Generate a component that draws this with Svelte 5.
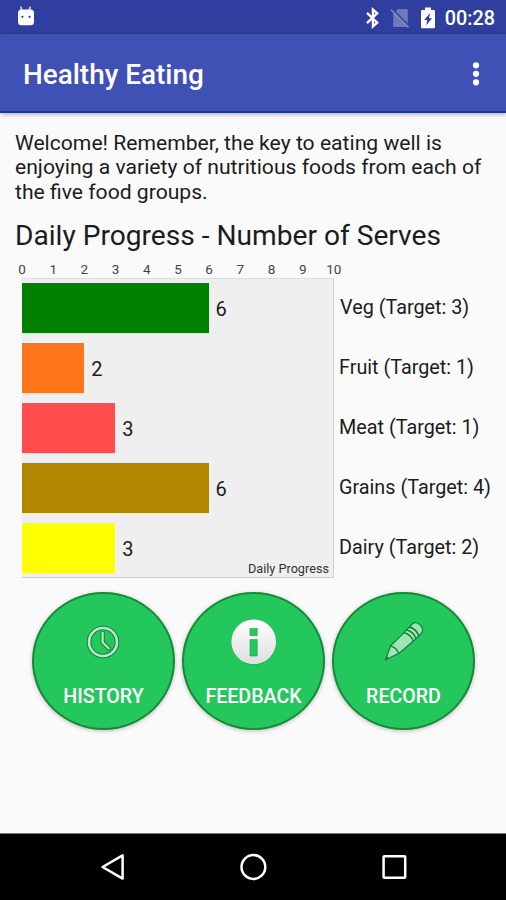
<script>
    const max = 10;
    const ticks = Array.from({ length: max + 1 }, (_, i) => i);

    const groups = [
        { name: 'Veg', serves: 6, target: 3, color: '#008000' },
        { name: 'Fruit', serves: 2, target: 1, color: '#ff7519' },
        { name: 'Meat', serves: 3, target: 1, color: '#ff4d4d' },
        { name: 'Grains', serves: 6, target: 4, color: '#b38600' },
        { name: 'Dairy', serves: 3, target: 2, color: '#ffff00' }
    ];
</script>

<div class="screen">
    <div class="status-bar">
        <svg class="robot" width="18" height="20" viewBox="0 0 18 20">
            <path d="M3.8 0.6 4.8 5M13.2 0.6 12.2 5" stroke="#c9cdf0" stroke-width="1.8" />
            <rect x="1" y="3.6" width="16" height="15.6" rx="3.5" fill="#fff" />
            <circle cx="5.4" cy="10.8" r="1.1" fill="#303f9f" />
            <circle cx="12.6" cy="10.8" r="1.1" fill="#303f9f" />
        </svg>
        <div class="status-icons">
            <svg width="14" height="22" viewBox="0 0 14 22">
                <path d="M1 5.8 11.2 15.6 6.9 19.4V2.6L11.2 6.4 1 16.2" fill="none" stroke="#fff" stroke-width="2.3" />
            </svg>
            <svg width="20" height="22" viewBox="0 0 20 22">
                <path d="M3.8 6.3 8 2H16.4Q17.8 2 17.8 3.4V20H3.2V7Z" fill="#6f79bc" />
                <path d="M2 1.6 19.4 19.4" stroke="#303f9f" stroke-width="1.6" />
                <path d="M1 2.6 18.4 20.4" stroke="#7d86c3" stroke-width="1.6" />
            </svg>
            <svg width="16" height="22" viewBox="0 0 16 22">
                <path d="M5 0.6H11V3H13.8Q15 3 15 4.2V20Q15 21.2 13.8 21.2H2.2Q1 21.2 1 20V4.2Q1 3 2.2 3H5Z" fill="#fff" />
                <path d="M10 6 4.2 13H7.2L6.2 18.4 12 11.2H9Z" fill="#303f9f" />
            </svg>
            <span class="clock">00:28</span>
        </div>
    </div>

    <header class="app-bar">
        <h1>Healthy Eating</h1>
        <button class="menu" aria-label="More options">
            <svg width="8" height="26" viewBox="0 0 8 26">
                <circle cx="4" cy="4.3" r="3.1" fill="#fff" />
                <circle cx="4" cy="12.8" r="3.1" fill="#fff" />
                <circle cx="4" cy="21.3" r="3.1" fill="#fff" />
            </svg>
        </button>
    </header>

    <main>
        <p class="welcome">
            Welcome! Remember, the key to eating well is enjoying a variety of nutritious foods from each of the five food groups.
        </p>
        <h2>Daily Progress - Number of Serves</h2>

        <div class="progress">
            <div class="chart">
                <div class="axis">
                    {#each ticks as tick}
                        <span>{tick}</span>
                    {/each}
                </div>
                <div class="plot">
                    {#each groups as group}
                        <div class="row">
                            <div class="bar" style="width: {(group.serves / max) * 100}%; background: {group.color}"></div>
                            <span class="value">{group.serves}</span>
                        </div>
                    {/each}
                    <span class="caption">Daily Progress</span>
                </div>
            </div>
            <div class="labels">
                {#each groups as group}
                    <span>{group.name} (Target: {group.target})</span>
                {/each}
            </div>
        </div>

        <div class="actions">
            <button class="action">
                <svg width="46" height="46" viewBox="0 0 46 46">
                    <circle cx="22" cy="23" r="14" fill="none" stroke="#17813b" stroke-width="4.6" />
                    <circle cx="22" cy="23" r="14" fill="none" stroke="#b5ebc6" stroke-width="2.6" />
                    <path d="M21.6 12.6V23.2L29 30.6" fill="none" stroke="#17813b" stroke-width="4.4" />
                    <path d="M21.6 13V23.2L28.4 30" fill="none" stroke="#b5ebc6" stroke-width="2.2" />
                </svg>
                History
            </button>
            <button class="action">
                <svg width="46" height="46" viewBox="0 0 46 46">
                    <defs>
                        <linearGradient id="info" x1="0" y1="0" x2="0" y2="1">
                            <stop offset="0" stop-color="#fff" />
                            <stop offset="1" stop-color="#dedede" />
                        </linearGradient>
                    </defs>
                    <circle cx="22.7" cy="23.4" r="22.5" fill="#179443" opacity="0.5" />
                    <circle cx="22.7" cy="22.8" r="22.4" fill="url(#info)" />
                    <path d="M19 9.4H26.2V16.6H19ZM19 20.6H26.2V37H19Z" fill="#24c75c" stroke="#21a64f" stroke-width="0.7" />
                </svg>
                Feedback
            </button>
            <button class="action">
                <svg width="46" height="46" viewBox="0 0 46 46">
                    <g stroke="#17813b" stroke-width="1.3" stroke-linejoin="round" fill="#9de5b3">
                        <path d="M4.4 41 9.6 26.8Q15.6 28.4 17.8 34.4Z" />
                        <path d="M9.6 26.8 23 13.6Q30.4 15.6 32.2 22.2L17.8 34.4Q15.6 28.4 9.6 26.8Z" />
                        <path d="M23 13.6 25.6 10.8Q33 12.8 35 19.6L32.2 22.2Q30.4 15.6 23 13.6Z" />
                        <path d="M25.6 10.8 28.4 8Q35.6 10 37.8 17L35 19.6Q33 12.8 25.6 10.8Z" />
                        <path d="M28.4 8 31.6 4.8Q34.6 2.4 38.4 5.2Q43 9 41 13.4L37.8 17Q35.6 10 28.4 8Z" />
                    </g>
                    <path d="M4.4 41 5.8 37 8.2 39.2Z" fill="#17813b" />
                </svg>
                Record
            </button>
        </div>
    </main>

    <nav class="nav-bar">
        <svg width="28" height="30" viewBox="0 0 28 30">
            <path d="M3.6 15 23.6 3.4V26.6Z" fill="none" stroke="#fff" stroke-width="2.5" stroke-linejoin="round" />
        </svg>
        <svg width="28" height="30" viewBox="0 0 28 30">
            <circle cx="14.4" cy="15" r="11.9" fill="none" stroke="#fff" stroke-width="2.5" />
        </svg>
        <svg width="28" height="30" viewBox="0 0 28 30">
            <rect x="3.6" y="4.2" width="21.6" height="21.6" rx="0.8" fill="none" stroke="#fff" stroke-width="2.5" />
        </svg>
    </nav>
</div>

<style>
    :global(body) {
        margin: 0;
    }

    .screen {
        display: flex;
        flex-direction: column;
        width: 506px;
        height: 900px;
        overflow: hidden;
        background: #fafafa;
        color: #1c1c1c;
        font-family: Roboto, sans-serif;
    }

    svg {
        display: block;
        flex: none;
    }

    h1,
    h2,
    p {
        margin: 0;
        font-weight: 400;
    }

    button {
        border: none;
        padding: 0;
        background: none;
        font-family: inherit;
    }

    .status-bar {
        display: flex;
        justify-content: space-between;
        box-sizing: border-box;
        height: 34px;
        padding: 6px 11px 0 17px;
        background: #303f9f;
        color: #fff;
    }

    .status-icons {
        display: flex;
        align-items: center;
        height: 23px;
    }

    .status-icons svg:nth-child(2) {
        margin-left: 10px;
    }

    .status-icons svg:nth-child(3) {
        margin-left: 10px;
    }

    .clock {
        margin-left: 9px;
        padding-top: 2px;
        font-size: 19.8px;
        font-weight: 500;
    }

    .app-bar {
        display: flex;
        align-items: center;
        justify-content: space-between;
        flex: none;
        box-sizing: border-box;
        height: 79px;
        padding: 2px 26px 0 23px;
        background: #3f51b5;
        border-bottom: 2px solid #1b37a0;
        color: #fff;
        box-shadow: 0 1px 5px rgba(0, 0, 0, 0.35);
    }

    h1 {
        padding-top: 2px;
        font-size: 27.9px;
        font-weight: 500;
    }

    main {
        flex: 1;
        padding: 17.6px 15px 0;
    }

    .welcome {
        width: 480px;
        font-size: 21.13px;
        line-height: 24.7px;
    }

    h2 {
        margin-top: 14px;
        font-size: 28.13px;
        line-height: 34px;
        white-space: nowrap;
    }

    .progress {
        display: flex;
        margin-top: 8.3px;
        padding-left: 7px;
    }

    .chart {
        flex: none;
        width: 312px;
    }

    .axis {
        display: flex;
        justify-content: space-between;
        height: 17px;
        margin: 0 -10px;
        font-size: 13.5px;
        line-height: 17px;
        color: #444;
    }

    .axis span {
        width: 20px;
        text-align: center;
    }

    .plot {
        position: relative;
        box-sizing: border-box;
        height: 300px;
        padding-top: 4px;
        border: 1px solid #d0d0d0;
        border-left: none;
        border-top-color: #dedede;
        background: #efefef;
    }

    .row {
        display: flex;
        align-items: center;
        height: 50px;
        margin-bottom: 10px;
    }

    .bar {
        height: 100%;
    }

    .value {
        margin-left: 7px;
        padding-top: 1px;
        font-size: 20px;
        line-height: 24px;
    }

    .caption {
        position: absolute;
        right: 4px;
        bottom: 0;
        font-size: 12.7px;
        line-height: 16px;
        color: #333;
    }

    .labels {
        display: grid;
        grid-auto-rows: 60px;
        align-items: center;
        padding: 16px 0 0 5px;
        font-size: 19.8px;
        white-space: nowrap;
    }

    .labels span:first-child {
        padding-left: 1px;
    }

    .actions {
        display: flex;
        gap: 7px;
        margin-top: 14px;
        padding-left: 17px;
    }

    .action {
        display: flex;
        flex-direction: column;
        align-items: center;
        box-sizing: border-box;
        width: 143px;
        height: 138px;
        padding-top: 25px;
        border: 2px solid #168a36;
        border-radius: 50%;
        background: #24c75c;
        box-shadow: 0 1px 4px rgba(0, 0, 0, 0.25);
        color: #fff;
        font-size: 19.6px;
        font-weight: 500;
        line-height: 24px;
        text-transform: uppercase;
    }

    .action svg {
        margin-bottom: 20px;
    }

    .nav-bar {
        display: flex;
        align-items: center;
        justify-content: center;
        gap: 112.5px;
        flex: none;
        box-sizing: border-box;
        height: 67px;
        border-top: 1px solid #777;
        background: #000;
    }
</style>
